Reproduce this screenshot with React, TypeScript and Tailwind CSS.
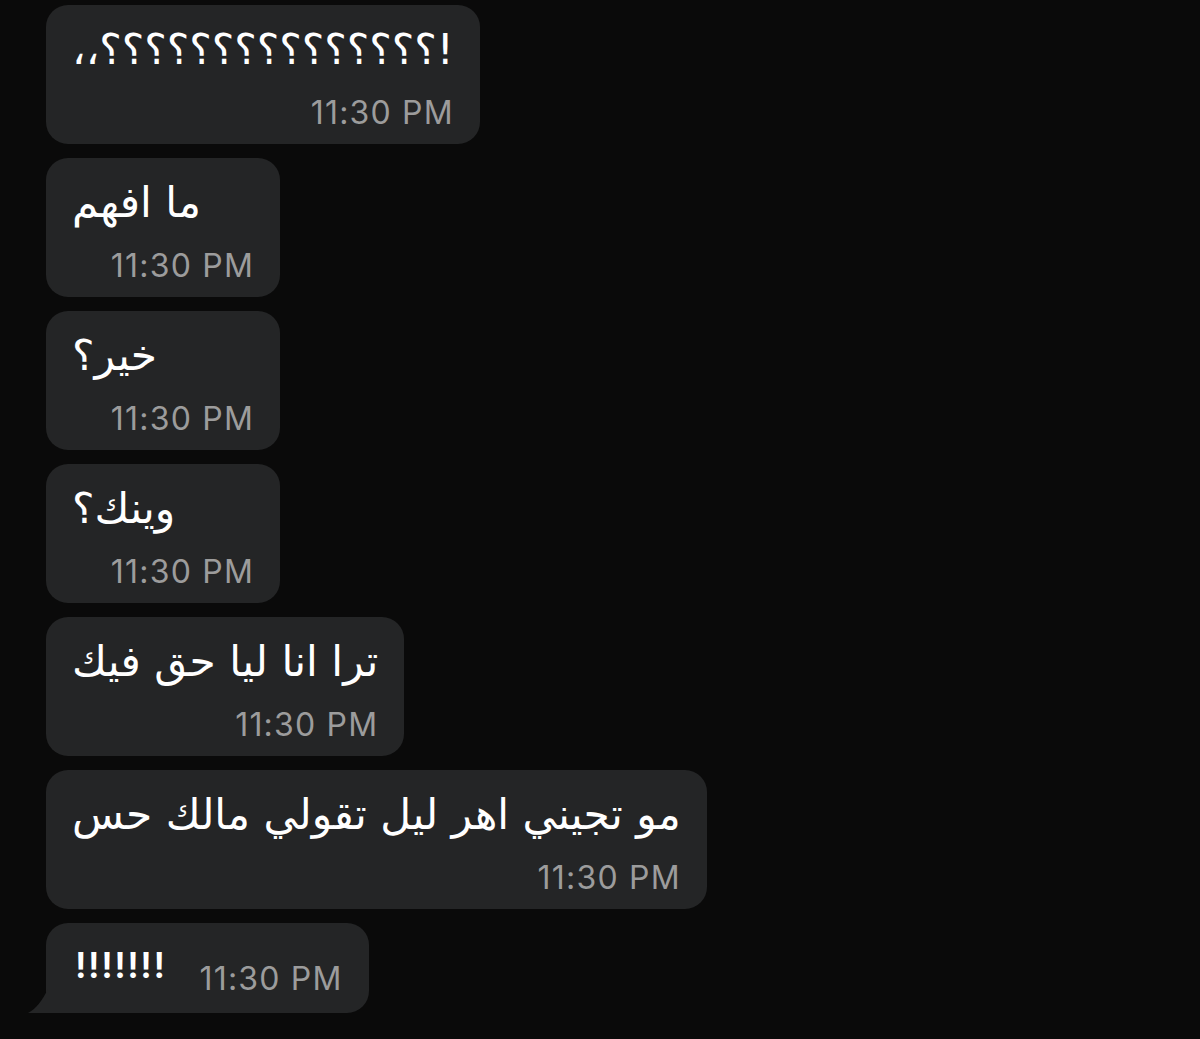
// Chat thread: incoming bubbles on a dark background.

type Message = { id: number; text: string; time: string };

const MESSAGES: Message[] = [
  { id: 1, text: '!؟؟؟؟؟؟؟؟؟؟؟؟؟؟؟،،', time: '11:30 PM' },
  { id: 2, text: 'ما افهم', time: '11:30 PM' },
  { id: 3, text: 'خير؟', time: '11:30 PM' },
  { id: 4, text: 'وينك؟', time: '11:30 PM' },
  { id: 5, text: 'ترا انا ليا حق فيك', time: '11:30 PM' },
  { id: 6, text: 'مو تجيني اهر ليل تقولي مالك حس', time: '11:30 PM' },
];

const ARABIC = 'font-["DejaVu_Sans","Noto_Sans",sans-serif]';
const TIME = 'font-["Inter","Roboto",sans-serif]';

function Bubble({ msg }: { msg: Message }) {
  return (
    <div className="flex h-[139px] min-w-[234px] flex-col rounded-[22px] bg-[#242526] px-[26px] pt-[20px]">
      <p dir="rtl" className={`${ARABIC} h-[50px] self-start text-left text-[42.4px] leading-[50px] text-white`}>
        {msg.text}
      </p>
      <span className={`${TIME} mt-[20px] self-end text-[32px] leading-[36px] tracking-[1.2px] text-[#9c9c9c]`}>
        {msg.time}
      </span>
    </div>
  );
}

function LastBubble() {
  return (
    <div className="relative flex h-[90px] items-end gap-[33px] rounded-[22px] rounded-bl-none bg-[#242526] pb-[16px] pl-[29px] pr-[26px]">
      <span className={`${TIME} mb-[14px] text-[36px] font-semibold leading-[36px] tracking-[1.5px] text-white`}>!!!!!!!</span>
      <span className={`${TIME} text-[32px] leading-[36px] tracking-[1.2px] text-[#9c9c9c]`}>11:30 PM</span>
      {/* tail */}
      <svg className="absolute bottom-0 left-[-18px]" width="20" height="24" viewBox="0 0 20 24">
        <path d="M20 0 L20 24 L0 24 C8 20 14 12 20 0 Z" fill="#242526" />
      </svg>
    </div>
  );
}

export default function App() {
  return (
    <div className="min-h-[1039px] w-[1200px] bg-[#0a0a0a]">
      <div className="flex flex-col items-start gap-[14px] pl-[46px] pt-[5px]">
        {MESSAGES.map((m) => (
          <Bubble key={m.id} msg={m} />
        ))}
        <LastBubble />
      </div>
    </div>
  );
}
